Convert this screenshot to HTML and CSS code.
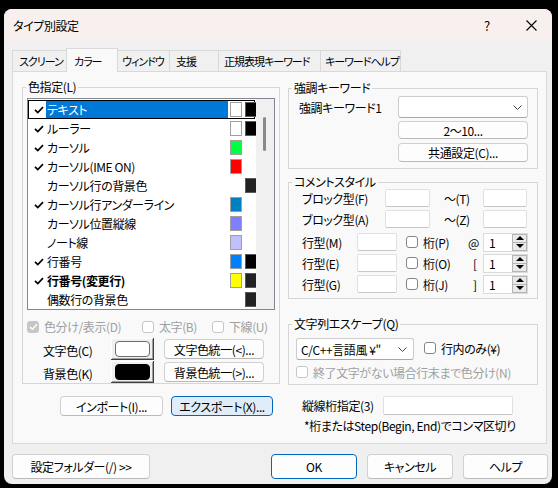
FILE: index.html
```html
<!DOCTYPE html>
<html lang="ja">
<head>
<meta charset="utf-8">
<title>タイプ別設定</title>
<link rel="stylesheet" href="styles.css">
</head>
<body>
<div class="window">
  <div class="titlebar">
    <span class="title">タイプ別設定</span>
    <span class="tb-help">?</span>
    <span class="tb-close"><svg width="11" height="11" viewBox="0 0 11 11"><path d="M0.5 0.5L10.5 10.5M10.5 0.5L0.5 10.5" stroke="#000" stroke-width="1.1" fill="none"/></svg></span>
  </div>
  <div class="tabs">
    <div class="tab t1">スクリーン</div>
    <div class="tab t2 active">カラー</div>
    <div class="tab t3">ウィンドウ</div>
    <div class="tab t4">支援</div>
    <div class="tab t5">正規表現キーワード</div>
    <div class="tab t6">キーワードヘルプ</div>
  </div>
  <div class="panel">
    <div class="cols">
      <div class="group g-color">
        <div class="gtitle">色指定(L)</div>
        <div class="list">
          <div class="items">
            <div class="item selected"><span class="chk"><svg width="10" height="8" viewBox="0 0 10 8"><path d="M1 3.8L3.8 6.6L9 1.2" stroke="#000" stroke-width="1.7" fill="none"/></svg></span><span class="itext">テキスト</span><span class="sw sw-white"></span><span class="sw sw-black"></span></div>
            <div class="item"><span class="chk"><svg width="10" height="8" viewBox="0 0 10 8"><path d="M1 3.8L3.8 6.6L9 1.2" stroke="#000" stroke-width="1.7" fill="none"/></svg></span><span class="itext">ルーラー</span><span class="sw sw-white"></span><span class="sw sw-black"></span></div>
            <div class="item"><span class="chk"><svg width="10" height="8" viewBox="0 0 10 8"><path d="M1 3.8L3.8 6.6L9 1.2" stroke="#000" stroke-width="1.7" fill="none"/></svg></span><span class="itext">カーソル</span><span class="sw sw-green"></span><span class="sw sw-none"></span></div>
            <div class="item"><span class="chk"><svg width="10" height="8" viewBox="0 0 10 8"><path d="M1 3.8L3.8 6.6L9 1.2" stroke="#000" stroke-width="1.7" fill="none"/></svg></span><span class="itext">カーソル(IME ON)</span><span class="sw sw-red"></span><span class="sw sw-none"></span></div>
            <div class="item"><span class="chk"></span><span class="itext">カーソル行の背景色</span><span class="sw sw-none"></span><span class="sw sw-dark"></span></div>
            <div class="item"><span class="chk"><svg width="10" height="8" viewBox="0 0 10 8"><path d="M1 3.8L3.8 6.6L9 1.2" stroke="#000" stroke-width="1.7" fill="none"/></svg></span><span class="itext">カーソル行アンダーライン</span><span class="sw sw-teal"></span><span class="sw sw-none"></span></div>
            <div class="item"><span class="chk"></span><span class="itext">カーソル位置縦線</span><span class="sw sw-violet"></span><span class="sw sw-none"></span></div>
            <div class="item"><span class="chk"></span><span class="itext">ノート線</span><span class="sw sw-lav"></span><span class="sw sw-none"></span></div>
            <div class="item"><span class="chk"><svg width="10" height="8" viewBox="0 0 10 8"><path d="M1 3.8L3.8 6.6L9 1.2" stroke="#000" stroke-width="1.7" fill="none"/></svg></span><span class="itext">行番号</span><span class="sw sw-blue"></span><span class="sw sw-black"></span></div>
            <div class="item"><span class="chk"><svg width="10" height="8" viewBox="0 0 10 8"><path d="M1 3.8L3.8 6.6L9 1.2" stroke="#000" stroke-width="1.7" fill="none"/></svg></span><span class="itext bold">行番号(変更行)</span><span class="sw sw-yellow"></span><span class="sw sw-dark"></span></div>
            <div class="item"><span class="chk"></span><span class="itext">偶数行の背景色</span><span class="sw sw-none"></span><span class="sw sw-dark"></span></div>
          </div>
          <div class="vscroll"><div class="thumb"></div></div>
        </div>
        <div class="cbrow">
          <div class="cb cb1 disabled"><span class="box checked"><svg width="9" height="8" viewBox="0 0 9 8"><path d="M1 4L3.5 6.3L8 1.3" stroke="#fff" stroke-width="1.5" fill="none"/></svg></span><span>色分け/表示(D)</span></div>
          <div class="cb cb2 disabled"><span class="box"></span><span>太字(B)</span></div>
          <div class="cb cb3 disabled"><span class="box"></span><span>下線(U)</span></div>
        </div>
        <div class="colrow">
          <span class="collabel">文字色(C)</span>
          <span class="cbtn"><span class="cswatch white"></span></span>
          <span class="btn unify">文字色統一(&lt;)...</span>
        </div>
        <div class="colrow r2">
          <span class="collabel">背景色(K)</span>
          <span class="cbtn"><span class="cswatch black"></span></span>
          <span class="btn unify">背景色統一(&gt;)...</span>
        </div>
      </div>
      <div class="rightcol">
        <div class="group g-kw">
          <div class="gtitle">強調キーワード</div>
          <div class="kwrow">
            <span class="kwlabel">強調キーワード1</span>
            <span class="combo kwcombo"><span></span><svg width="9" height="5" viewBox="0 0 9 5"><path d="M0.5 0.5L4.5 4.5L8.5 0.5" stroke="#444" stroke-width="1" fill="none"/></svg></span>
          </div>
          <div class="btn kwbtn b1">2〜10...</div>
          <div class="btn kwbtn b2">共通設定(C)...</div>
        </div>
        <div class="group g-cm">
          <div class="gtitle">コメントスタイル</div>
          <div class="cmrow rF">
            <span class="lbl-block">ブロック型(F)</span>
            <span class="tinput w45"></span>
            <span class="lbl-tilde">〜(T)</span>
            <span class="tinput w44"></span>
          </div>
          <div class="cmrow rA">
            <span class="lbl-block">ブロック型(A)</span>
            <span class="tinput w45"></span>
            <span class="lbl-tilde">〜(Z)</span>
            <span class="tinput w44"></span>
          </div>
          <div class="cmrow rM">
            <span class="lbl-line">行型(M)</span>
            <span class="tinput w40"></span>
            <span class="cb cmcb"><span class="box"></span><span>桁(P)</span></span>
            <span class="sym">@</span>
            <span class="spin"><span class="spinval">1</span><span class="spinbtns"><span class="sup"><i class="up"></i></span><span class="sdn"><i class="dn"></i></span></span></span>
          </div>
          <div class="cmrow rE">
            <span class="lbl-line">行型(E)</span>
            <span class="tinput w40"></span>
            <span class="cb cmcb"><span class="box"></span><span>桁(O)</span></span>
            <span class="sym br">[</span>
            <span class="spin"><span class="spinval">1</span><span class="spinbtns"><span class="sup"><i class="up"></i></span><span class="sdn"><i class="dn"></i></span></span></span>
          </div>
          <div class="cmrow rG">
            <span class="lbl-line">行型(G)</span>
            <span class="tinput w40"></span>
            <span class="cb cmcb"><span class="box"></span><span>桁(J)</span></span>
            <span class="sym br">]</span>
            <span class="spin"><span class="spinval">1</span><span class="spinbtns"><span class="sup"><i class="up"></i></span><span class="sdn"><i class="dn"></i></span></span></span>
          </div>
        </div>
        <div class="group g-esc">
          <div class="gtitle">文字列エスケープ(Q)</div>
          <div class="escrow">
            <span class="combo esccombo"><span>C/C++言語風 ¥"</span><svg width="9" height="5" viewBox="0 0 9 5"><path d="M0.5 0.5L4.5 4.5L8.5 0.5" stroke="#444" stroke-width="1" fill="none"/></svg></span>
            <span class="cb esccb"><span class="box"></span><span>行内のみ(¥)</span></span>
          </div>
          <div class="escrow2 cb disabled"><span class="box"></span><span>終了文字がない場合行末まで色分け(N)</span></div>
        </div>
      </div>
    </div>
    <div class="brow">
      <div class="iobtns">
        <span class="btn iobtn">インポート(I)...</span>
        <span class="btn iobtn export">エクスポート(X)...</span>
      </div>
      <div class="vline">
        <div class="vlrow"><span class="vllabel">縦線桁指定(3)</span><span class="tinput vlinput"></span></div>
        <div class="vlnote">*桁またはStep(Begin, End)でコンマ区切り</div>
      </div>
    </div>
  </div>
  <div class="footer">
    <span class="btn fbtn folder">設定フォルダー(/) &gt;&gt;</span>
    <span class="spacer"></span>
    <span class="btn fbtn ok">OK</span>
    <span class="btn fbtn cancel">キャンセル</span>
    <span class="btn fbtn help">ヘルプ</span>
  </div>
</div>
</body>
</html>
```

FILE: styles.css
```css
* { box-sizing: border-box; }
html, body { margin: 0; background: #000; }
body {
  width: 558px; height: 488px; overflow: hidden;
  font-family: "Noto Sans CJK JP", "Noto Sans", sans-serif;
  font-size: 12px; color: #000;
  font-feature-settings: "palt";
  letter-spacing: -0.4px;
}
.window {
  margin: 9px 0 0 4px; width: 548px; height: 475px;
  background: #f0f0f0; border-radius: 8px; overflow: hidden;
  display: flex; flex-direction: column;
}
.titlebar { height: 32px; flex-shrink: 0; background: #f7f0ef; display: flex; align-items: center; }
.title { flex: 1; padding-left: 9px; }
.tb-help { width: 46px; text-align: center; font-size: 13px; }
.tb-close { width: 42px; display: flex; justify-content: center; }

.tabs { display: flex; align-items: flex-start; height: 30px; padding: 7px 0 0 8px; flex-shrink: 0; }
.tab {
  height: 21px; margin-top: 2px; margin-right: -1px;
  background: #f0f0f0; border: 1px solid #d9d9d9; border-bottom: none;
  display: flex; align-items: center; white-space: nowrap;
  font-size: 11px; letter-spacing: -1px;
}
.tab.active { height: 24px; margin-top: 0; margin-bottom: -1px; background: #f9f9f9; position: relative; z-index: 1; }
.t1 { width: 55px; padding-left: 6px; }
.t2 { width: 52px; padding-left: 7px; }
.t3 { width: 53px; padding-left: 4px; }
.t4 { width: 50px; padding-left: 6px; }
.t5 { width: 103px; padding-left: 5px; }
.t6 { width: 81px; padding-left: 4px; }

.panel {
  margin-left: 8px; width: 535px; height: 373px; flex-shrink: 0;
  background: #f9f9f9; border: 1px solid #d9d9d9;
  padding: 15px 0 0 9px;
}
.cols { display: grid; grid-template-columns: 258px 250px; column-gap: 8px; height: 298px; }

.group { border: 1px solid #d6d6d6; }
.gtitle { margin: -9px 0 0 3px; padding: 0 2px; line-height: 16px; background: #f9f9f9; width: max-content; }

/* color group */
.g-color { height: 297px; }
.list {
  margin: 3px 0 0 4px; width: 248px; height: 212px;
  border: 1px solid #828790; background: #fff; display: flex; padding-top: 1px;
}
.items { width: 227px; }
.item { height: 19px; border: 1px solid transparent; display: flex; align-items: center; }
.item.selected { border-color: #000; }
.chk { width: 17px; flex-shrink: 0; display: flex; justify-content: center; padding-left: 2px; }
.itext { width: 182px; flex-shrink: 0; height: 17px; line-height: 17px; padding-left: 1px; white-space: nowrap; }
.item.selected .itext { background: #0078d7; color: #fff; }
.itext.bold { font-weight: bold; }
.sw { width: 12px; height: 15px; flex-shrink: 0; margin-left: 2px; border: 1px solid #a0a0a0; }
.sw + .sw { margin-left: 3px; }
.sw-none { border: none; background: transparent; }
.sw-white { background: #fff; }
.sw-black { background: #000; border-color: #5a5a5a; }
.sw-dark { background: #222; border-color: #5a5a5a; }
.sw-green { background: #00ff40; }
.sw-red { background: #ff0000; }
.sw-teal { background: #0080c0; }
.sw-violet { background: #8080ff; }
.sw-lav { background: #c0c0ff; }
.sw-blue { background: #0080ff; }
.sw-yellow { background: #ffff00; }
.vscroll { width: 18px; margin-left: 1px; margin-top: -1px; height: 210px; background: #f0f0f0; padding: 18px 0 0 7px; }
.thumb { width: 3px; height: 34px; border-radius: 2px; background: #8a8a8a; }

.cb { display: flex; align-items: center; gap: 5px; white-space: nowrap; }
.box { width: 12px; height: 12px; border: 1px solid #858585; border-radius: 3px; background: #fff; flex-shrink: 0; display: flex; align-items: center; justify-content: center; }
.cb.disabled { color: #a0a0a0; }
.cb.disabled .box { border-color: #c6c6c6; }
.cb.disabled .box.checked { background: #c6c6c6; }

.cbrow { display: flex; height: 19px; margin-top: 7px; padding-left: 4px; align-items: center; }
.cb1 { width: 115px; }
.cb2 { width: 70px; }
.colrow { display: flex; align-items: center; height: 22px; margin-top: 2px; padding-left: 20px; }
.colrow.r2 { margin-top: 1px; }
.collabel { width: 68px; flex-shrink: 0; padding-top: 3px; }
.cbtn {
  width: 43px; height: 22px; flex-shrink: 0; background: #f0f0f0;
  box-shadow: inset -1px -1px #404040, inset 1px 1px #fff, inset -2px -2px #a0a0a0;
  display: flex; align-items: center; justify-content: center; padding: 0 1px 1px 0;
}
.cswatch { width: 35px; height: 16px; border-radius: 4px; border: 1px solid #6d6d6d; }
.cswatch.white { background: #fff; }
.cswatch.black { background: #000; border-color: #000; }

.btn {
  background: #fdfdfd; border: 1px solid #d0d0d0; border-bottom-color: #b9b9b9;
  border-radius: 4px; display: flex; align-items: center; justify-content: center;
  white-space: nowrap;
}
.unify { width: 100px; height: 20px; margin-left: 10px; }

/* right column */
.rightcol { display: flex; flex-direction: column; }
.g-kw { margin-top: 1px; height: 81px; }
.kwrow { display: flex; align-items: center; height: 22px; padding-left: 10px; }
.kwlabel { width: 99px; flex-shrink: 0; }
.combo {
  background: #fff; border: 1px solid #cdcdcd; border-bottom-color: #a8a8a8; border-radius: 3px;
  display: flex; align-items: center; justify-content: space-between; white-space: nowrap;
}
.kwcombo { width: 130px; height: 22px; padding: 0 5px 0 5px; }
.kwbtn { margin-left: 109px; width: 130px; }
.kwbtn.b1 { height: 18px; margin-top: 3px; }
.kwbtn.b2 { height: 19px; margin-top: 4px; }

.g-cm { margin-top: 13px; height: 117px; }
.cmrow { display: flex; align-items: center; height: 18px; padding-left: 13px; }
.rF { margin-top: -1px; }
.rA { margin-top: 3px; }
.rM { margin-top: 5px; }
.rE, .rG { margin-top: 3px; }
.tinput { height: 18px; flex-shrink: 0; background: #fff; border: 1px solid #e0e0e0; border-bottom-color: #c6c6c6; border-radius: 2px; }
.w45 { width: 45px; }
.w44 { width: 44px; }
.w40 { width: 40px; }
.lbl-block { width: 83px; flex-shrink: 0; }
.lbl-tilde { width: 39px; flex-shrink: 0; margin-left: 14px; }
.lbl-line { width: 55px; flex-shrink: 0; }
.cmcb { width: 62px; flex-shrink: 0; margin-left: 9px; }
.sym { width: 15px; flex-shrink: 0; }
.sym.br { padding-left: 5px; }
.spin { width: 45px; height: 19px; flex-shrink: 0; background: #fff; border: 1px solid #dadada; display: flex; }
.spinval { flex: 1; padding-left: 5px; line-height: 17px; }
.spinbtns { width: 15px; display: flex; flex-direction: column; }
.sup, .sdn { flex: 1; background: #e9e9e9; border: 1px solid #b5b5b5; display: flex; align-items: center; justify-content: center; }
.sdn { border-top: none; }
.up { width: 0; height: 0; border-left: 4px solid transparent; border-right: 4px solid transparent; border-bottom: 4px solid #000; }
.dn { width: 0; height: 0; border-left: 4px solid transparent; border-right: 4px solid transparent; border-top: 4px solid #000; }

.g-esc { margin-top: 25px; height: 61px; }
.escrow { display: flex; align-items: center; height: 22px; margin-top: 6px; padding-left: 7px; }
.esccombo { width: 118px; height: 22px; padding: 0 6px 0 4px; }
.esccb { margin-left: 10px; padding-bottom: 2px; }
.escrow2 { height: 18px; margin-top: 3px; padding-left: 7px; }

/* bottom of panel */
.brow { display: grid; grid-template-columns: 258px 250px; column-gap: 8px; margin-top: 11px; }
.iobtns { display: flex; padding-left: 38px; }
.iobtn { height: 20px; width: 103px; }
.iobtn.export { width: 102px; margin-left: 8px; background: #e0ecf8; border-color: #0067c0; }
.vline { padding-left: 14px; }
.vlrow { display: flex; align-items: center; height: 19px; }
.vllabel { width: 81px; flex-shrink: 0; }
.vlinput { width: 130px; height: 19px; }
.vlnote { margin-top: 3px; padding-left: 2px; line-height: 16px; }

/* footer */
.footer { display: flex; padding: 0 4px 0 8px; margin-top: 10px; }
.fbtn { height: 25px; width: 86px; }
.folder { width: 138px; }
.spacer { flex: 1; }
.ok { border-color: #0067c0; }
.cancel { margin-left: 10px; }
.help { margin-left: 10px; width: 85px; }
```
